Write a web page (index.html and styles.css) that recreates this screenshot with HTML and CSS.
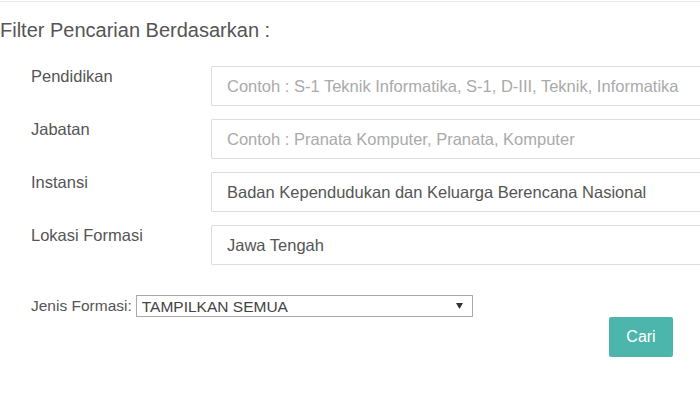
FILE: index.html
```html
<!DOCTYPE html>
<html lang="id">
<head>
  <meta charset="UTF-8">
  <meta name="viewport" content="width=device-width, initial-scale=1.0">
  <title>Filter Pencarian Formasi</title>
  <link rel="stylesheet" href="styles.css">
</head>
<body>
  <div class="page">
    <h1 class="title">Filter Pencarian Berdasarkan :</h1>

    <div class="fields">
      <label class="field-label" for="pendidikan">Pendidikan</label>
      <input class="field-input" id="pendidikan" type="text" placeholder="Contoh : S-1 Teknik Informatika, S-1, D-III, Teknik, Informatika">

      <label class="field-label" for="jabatan">Jabatan</label>
      <input class="field-input" id="jabatan" type="text" placeholder="Contoh : Pranata Komputer, Pranata, Komputer">

      <label class="field-label" for="instansi">Instansi</label>
      <input class="field-input" id="instansi" type="text" value="Badan Kependudukan dan Keluarga Berencana Nasional">

      <label class="field-label" for="lokasi">Lokasi Formasi</label>
      <input class="field-input" id="lokasi" type="text" value="Jawa Tengah">
    </div>

    <div class="jenis">
      <label for="jenis">Jenis Formasi:</label>
      <div class="select-wrap">
        <select id="jenis">
          <option>TAMPILKAN SEMUA</option>
          <option>UMUM</option>
          <option>CUMLAUDE</option>
        </select>
        <svg class="arrow" width="7" height="6" viewBox="0 0 7 6"><path d="M0 0H7L3.5 6Z" fill="#333"/></svg>
      </div>
    </div>

    <div class="actions">
      <button class="btn-cari">Cari</button>
    </div>
  </div>
</body>
</html>
```

FILE: styles.css
```css
body { margin: 0; font-family: "Liberation Sans", Arial, sans-serif; color: #555; background: #fff; overflow: hidden; }
.page { border-top: 1px solid #e6e6e6; margin-top: 1px; height: 391px; overflow: hidden; }
.title { font-size: 20px; font-weight: normal; color: #555; margin: 0; padding-top: 17px; line-height: 23px; white-space: nowrap; }
.fields { display: grid; grid-template-columns: 180px 489px; row-gap: 13px; margin: 24px 0 0 31px; }
.field-label { font-size: 16.5px; line-height: 20px; color: #555; }
.field-input { box-sizing: border-box; height: 40px; width: 489px; border: 1px solid #ddd; border-right: none; border-radius: 2px 0 0 2px; padding: 0 15px; font-family: inherit; font-size: 16.5px; color: #555; outline: none; }
.field-input::placeholder { color: #aaa; }
.jenis { display: flex; align-items: center; margin: 30px 0 0 31px; font-size: 15.5px; }
.jenis label { margin-right: 4px; }
.select-wrap { position: relative; display: flex; }
.select-wrap select { appearance: none; -webkit-appearance: none; box-sizing: border-box; width: 337px; height: 22px; border: 1px solid #aaa; border-radius: 0; background: #fff; padding: 0 5px; font-family: inherit; font-size: 15.5px; color: #444; }
.arrow { position: absolute; right: 10px; top: 8px; pointer-events: none; }
.actions { display: flex; justify-content: flex-end; padding-right: 27px; }
.btn-cari { width: 64px; height: 40px; border: none; border-radius: 2px; background: #4db6ac; color: #fff; font-family: inherit; font-size: 16px; cursor: pointer; }
```
